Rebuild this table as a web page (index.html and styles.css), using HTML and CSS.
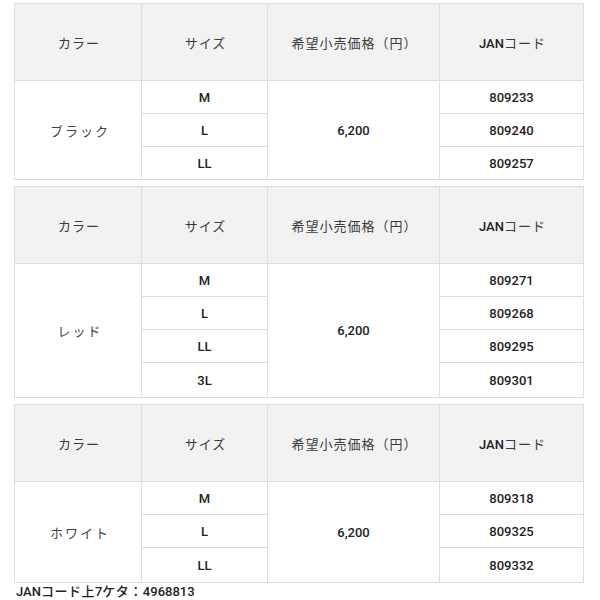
FILE: index.html
```html
<!DOCTYPE html>
<html lang="ja">
<head>
<meta charset="utf-8">
<title>価格表</title>
<link rel="stylesheet" href="styles.css">
</head>
<body>
<div class="wrap">
  <table class="spec">
    <colgroup><col class="c1"><col class="c2"><col class="c3"><col class="c4"></colgroup>
    <thead>
      <tr><th>カラー</th><th>サイズ</th><th>希望小売価格（円）</th><th><span class="en">JAN</span>コード</th></tr>
    </thead>
    <tbody>
      <tr><td rowspan="3" class="jp">ブラック</td><td class="en">M</td><td rowspan="3" class="en">6,200</td><td class="en">809233</td></tr>
      <tr><td class="en">L</td><td class="en">809240</td></tr>
      <tr><td class="en">LL</td><td class="en">809257</td></tr>
    </tbody>
  </table>
  <table class="spec">
    <colgroup><col class="c1"><col class="c2"><col class="c3"><col class="c4"></colgroup>
    <thead>
      <tr><th>カラー</th><th>サイズ</th><th>希望小売価格（円）</th><th><span class="en">JAN</span>コード</th></tr>
    </thead>
    <tbody>
      <tr><td rowspan="4" class="jp">レッド</td><td class="en">M</td><td rowspan="4" class="en">6,200</td><td class="en">809271</td></tr>
      <tr><td class="en">L</td><td class="en">809268</td></tr>
      <tr><td class="en">LL</td><td class="en">809295</td></tr>
      <tr class="tall"><td class="en">3L</td><td class="en">809301</td></tr>
    </tbody>
  </table>
  <table class="spec last">
    <colgroup><col class="c1"><col class="c2"><col class="c3"><col class="c4"></colgroup>
    <thead>
      <tr><th>カラー</th><th>サイズ</th><th>希望小売価格（円）</th><th><span class="en">JAN</span>コード</th></tr>
    </thead>
    <tbody>
      <tr><td rowspan="3" class="jp">ホワイト</td><td class="en">M</td><td rowspan="3" class="en">6,200</td><td class="en">809318</td></tr>
      <tr><td class="en">L</td><td class="en">809325</td></tr>
      <tr class="tall"><td class="en">LL</td><td class="en">809332</td></tr>
    </tbody>
  </table>
  <p class="note"><span class="en">JAN</span>コード上<span class="en">7</span>ケタ：<span class="en">4968813</span></p>
</div>
</body>
</html>
```

FILE: styles.css
```css
html, body {
  margin: 0;
  padding: 0;
  background: #fff;
}
body {
  font-family: Roboto, "Noto Sans CJK JP", sans-serif;
  font-size: 13px;
  color: #333;
}
.wrap {
  padding: 3px 0 0 14px;
}
.spec {
  border-collapse: collapse;
  table-layout: fixed;
  width: 569px;
  margin: 0 0 6px 0;
}
.spec.last {
  margin-bottom: 0;
}
.c1 { width: 127px; }
.c2 { width: 126px; }
.c3 { width: 172px; }
.c4 { width: 144px; }
.spec th,
.spec td {
  border: 1px solid #dedede;
  text-align: center;
  vertical-align: middle;
  padding: 0;
}
.spec th {
  background: #f2f2f2;
  font-weight: 400;
  height: 76px;
  color: #3a3a3a;
  letter-spacing: 1px;
  padding-left: 2px;
}
.spec tbody tr {
  height: 33px;
}
.spec tbody tr.tall {
  height: 35px;
}
.spec td.jp {
  letter-spacing: 2px;
  color: #444;
  padding-left: 4px;
}
.en {
  font-family: Roboto, "Noto Sans CJK JP", sans-serif;
  font-weight: 500;
  color: #222;
  letter-spacing: 0;
}
.note {
  margin: 0;
  padding: 1px 0 0 2px;
  line-height: 16px;
  color: #222;
  font-weight: 500;
  letter-spacing: 0.5px;
}
```
